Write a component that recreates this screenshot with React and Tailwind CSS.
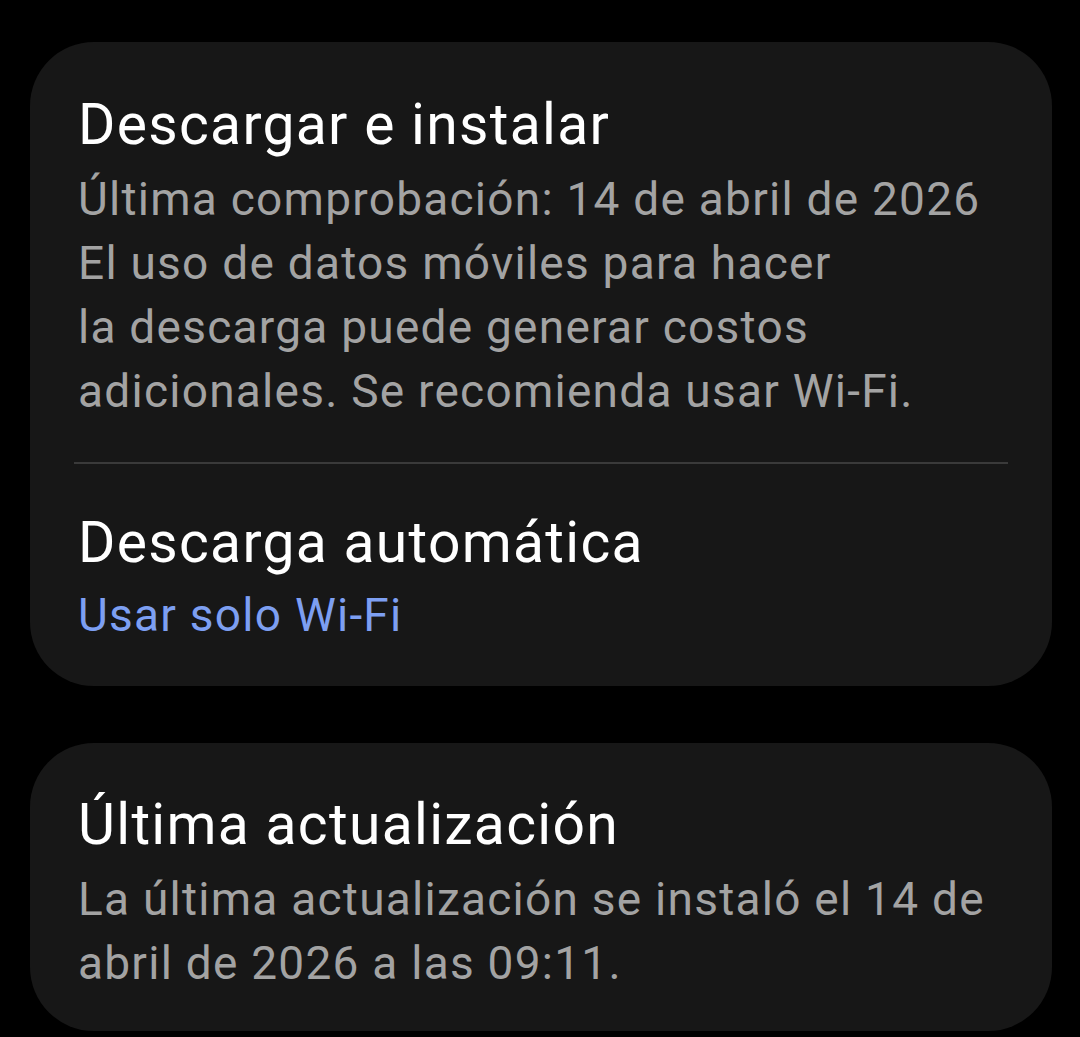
export default function App() {
  return (
    <div
      className="min-h-[1037px] w-[1080px] bg-black pt-[42px] pl-[30px] pr-[28px]"
      style={{ fontFamily: 'Roboto, "Noto Sans", sans-serif' }}
    >
      {/* Descargar e instalar */}
      <div className="rounded-[64px] bg-[#171717] pt-[48px] pb-[39px]">
        <div className="px-[48px]">
          <div className="text-[57px] leading-[70px] tracking-[1.3px] text-white">Descargar e instalar</div>
          <div className="mt-[7px] text-[46px] leading-[64px] tracking-[1.25px] text-[#a3a3a3]">
            Última comprobación: 14 de abril de 2026
            <br />
            El uso de datos móviles para hacer
            <br />
            la descarga puede generar costos
            <br />
            adicionales. Se recomienda usar Wi-Fi.
          </div>
        </div>

        <div className="mx-[44px] mt-[39px] h-[2px] bg-[#3a3a3a]" />

        <div className="px-[48px] pt-[44px]">
          <div className="text-[57px] leading-[70px] tracking-[1.3px] text-white">Descarga automática</div>
          <div className="mt-[5px] text-[46px] leading-[64px] tracking-[1.25px] text-[#7d9ff2]">Usar solo Wi-Fi</div>
        </div>
      </div>

      {/* Última actualización */}
      <div className="mt-[57px] rounded-[64px] bg-[#171717] px-[48px] pt-[47px] pb-[36px]">
        <div className="text-[57px] leading-[70px] tracking-[1.3px] text-white">Última actualización</div>
        <div className="mt-[7px] text-[46px] leading-[64px] tracking-[1.25px] text-[#a3a3a3]">
          La última actualización se instaló el 14 de
          <br />
          abril de 2026 a las 09:11.
        </div>
      </div>
    </div>
  )
}
